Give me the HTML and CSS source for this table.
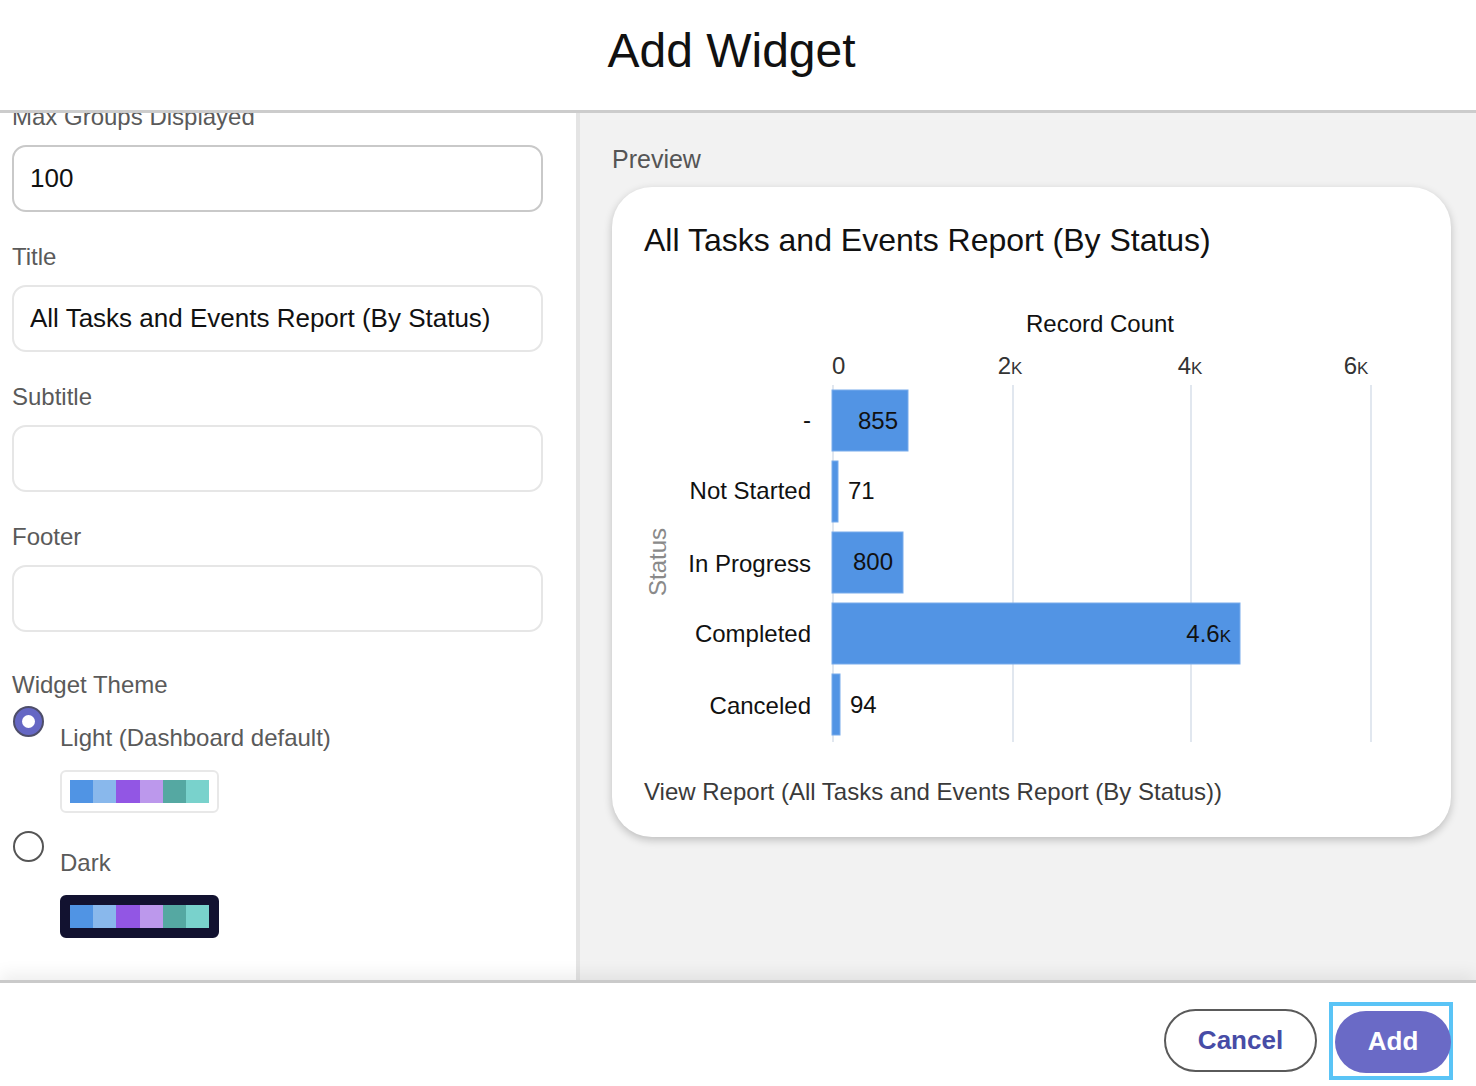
FILE: index.html
```html
<!DOCTYPE html>
<html lang="en">
<head>
<meta charset="utf-8">
<title>Add Widget</title>
<link rel="stylesheet" href="styles.css">
</head>
<body>
<div class="modal">
  <header class="modal-header">
    <h1 class="modal-title">Add Widget</h1>
  </header>
  <main class="modal-body">
    <section class="form-panel">
      <div class="form-content">
        <div class="field">
          <label class="field-label">Max Groups Displayed</label>
          <input class="field-input is-strong" type="text" value="100">
        </div>
        <div class="field">
          <label class="field-label">Title</label>
          <input class="field-input" type="text" value="All Tasks and Events Report (By Status)">
        </div>
        <div class="field">
          <label class="field-label">Subtitle</label>
          <input class="field-input" type="text" value="">
        </div>
        <div class="field">
          <label class="field-label">Footer</label>
          <input class="field-input" type="text" value="">
        </div>
        <div class="theme-group">
          <div class="field-label">Widget Theme</div>
          <div class="theme-option">
            <span class="radio is-checked"></span>
            <div class="theme-body">
              <div class="theme-name">Light (Dashboard default)</div>
              <div class="swatch swatch-light">
                <span class="c1"></span><span class="c2"></span><span class="c3"></span><span class="c4"></span><span class="c5"></span><span class="c6"></span>
              </div>
            </div>
          </div>
          <div class="theme-option">
            <span class="radio"></span>
            <div class="theme-body">
              <div class="theme-name">Dark</div>
              <div class="swatch swatch-dark">
                <span class="c1"></span><span class="c2"></span><span class="c3"></span><span class="c4"></span><span class="c5"></span><span class="c6"></span>
              </div>
            </div>
          </div>
        </div>
      </div>
    </section>
    <section class="preview-panel">
      <div class="preview-label">Preview</div>
      <div class="card">
        <div class="card-title">All Tasks and Events Report (By Status)</div>
        <svg class="chart" width="775" height="520" viewBox="0 0 775 520">
          <text class="axis-title" x="456" y="74" text-anchor="middle">Record Count</text>
          <text class="tick" x="188" y="116">0</text>
          <text class="tick" x="366" y="116" text-anchor="middle">2k</text>
          <text class="tick" x="546" y="116" text-anchor="middle">4k</text>
          <text class="tick" x="712" y="116" text-anchor="middle">6k</text>
          <g class="grid">
            <line x1="189" y1="127" x2="189" y2="484"></line>
            <line x1="369" y1="127" x2="369" y2="484"></line>
            <line x1="547" y1="127" x2="547" y2="484"></line>
            <line x1="727" y1="127" x2="727" y2="484"></line>
          </g>
          <g class="bars">
            <rect x="188" y="132" width="76" height="61"></rect>
            <rect x="188" y="203" width="6" height="61"></rect>
            <rect x="188" y="274" width="71" height="61"></rect>
            <rect x="188" y="345" width="408" height="61"></rect>
            <rect x="188" y="416" width="8" height="61"></rect>
          </g>
          <g class="values">
            <text x="254" y="171" text-anchor="end">855</text>
            <text x="204" y="241">71</text>
            <text x="249" y="312" text-anchor="end">800</text>
            <text x="587" y="384" text-anchor="end">4.6k</text>
            <text x="206" y="455">94</text>
          </g>
          <g class="cats">
            <text x="167" y="170" text-anchor="end">-</text>
            <text x="167" y="241" text-anchor="end">Not Started</text>
            <text x="167" y="314" text-anchor="end">In Progress</text>
            <text x="167" y="384" text-anchor="end">Completed</text>
            <text x="167" y="456" text-anchor="end">Canceled</text>
          </g>
          <text class="dim-title" transform="translate(22,304) rotate(-90)" text-anchor="middle">Status</text>
        </svg>
        <div class="card-link">View Report (All Tasks and Events Report (By Status))</div>
      </div>
    </section>
  </main>
  <footer class="modal-footer">
    <button class="btn btn-cancel" type="button">Cancel</button>
    <div class="focus-ring">
      <button class="btn btn-add" type="button">Add</button>
    </div>
  </footer>
</div>
</body>
</html>
```
FILE: styles.css
```css
* { box-sizing: border-box; }

html, body {
  margin: 0;
  padding: 0;
  background: #ffffff;
}

body {
  font-family: "Liberation Sans", Arial, Helvetica, sans-serif;
  color: #111;
}

.modal {
  width: 1476px;
  height: 1086px;
  display: flex;
  flex-direction: column;
  overflow: hidden;
}

.modal-header {
  height: 113px;
  flex: none;
  border-bottom: 3px solid #cccccc;
  display: flex;
  align-items: center;
  justify-content: center;
  padding-right: 13px;
  background: #fff;
}

.modal-title {
  margin: 0;
  font-size: 48px;
  font-weight: 400;
  line-height: 1;
  color: #111;
  padding-bottom: 8px;
}

.modal-body {
  flex: 1;
  min-height: 0;
  display: flex;
}

.form-panel {
  width: 580px;
  flex: none;
  border-right: 4px solid #e4e4e4;
  background: #fff;
  overflow: hidden;
  padding: 0 33px 0 12px;
}

.form-content {
  margin-top: -10px;
}

.field {
  margin-bottom: 31px;
}

.field-label {
  display: block;
  font-size: 24px;
  line-height: 28px;
  color: #5a5a5a;
  margin-bottom: 14px;
}

.field-input {
  display: block;
  width: 531px;
  height: 67px;
  border: 2px solid #e6e6e6;
  border-radius: 14px;
  padding: 0 16px;
  font-family: "Liberation Sans", Arial, sans-serif;
  font-size: 26px;
  color: #111;
  background: #fff;
  outline: none;
}

.field-input.is-strong {
  border-color: #c9c9c9;
}

.theme-group {
  padding-top: 8px;
}

.theme-group .field-label {
  margin-bottom: 7px;
}

.theme-option {
  display: flex;
  gap: 16px;
  margin-bottom: 18px;
}

.radio {
  flex: none;
  width: 31px;
  height: 31px;
  margin-left: 1px;
  border-radius: 50%;
  border: 2px solid #555;
  background: #fff;
  display: flex;
  align-items: center;
  justify-content: center;
}

.radio.is-checked {
  background: #6567c4;
  border-color: #4e4e6a;
}

.radio.is-checked::after {
  content: "";
  width: 13px;
  height: 13px;
  border-radius: 50%;
  background: #fff;
}

.theme-body {
  padding-top: 18px;
}

.theme-name {
  font-size: 24px;
  line-height: 28px;
  color: #5a5a5a;
  margin-bottom: 18px;
}

.swatch {
  width: 159px;
  height: 43px;
  border-radius: 6px;
  padding: 8px;
  display: flex;
}

.swatch-light {
  border: 2px solid #e8e8e8;
  background: #fff;
}

.swatch-dark {
  border: 2px solid #121230;
  background: #121230;
}

.swatch span { flex: 1; }
.swatch .c1 { background: #5094e4; }
.swatch .c2 { background: #89b8ec; }
.swatch .c3 { background: #9256e4; }
.swatch .c4 { background: #bc98ec; }
.swatch .c5 { background: #55a8a2; }
.swatch .c6 { background: #79d2cc; }

.preview-panel {
  flex: 1;
  background: #f2f2f2;
  padding: 31px 25px 0 32px;
}

.preview-label {
  font-size: 25px;
  line-height: 30px;
  color: #555;
  margin-bottom: 13px;
}

.card {
  width: 839px;
  height: 650px;
  background: #fff;
  border-radius: 40px;
  box-shadow: 0 3px 8px rgba(0, 0, 0, 0.22);
  padding: 35px 32px 0 32px;
}

.card-title {
  font-size: 32px;
  line-height: 36px;
  color: #111;
}

.chart {
  display: block;
  font-family: "Liberation Sans", Arial, sans-serif;
  font-size: 24px;
}

.chart .axis-title { fill: #111; }
.chart .tick { fill: #333; font-variant: small-caps; }
.chart .grid line { stroke: #e1e7ef; stroke-width: 2; }
.chart .bars rect { fill: #5294e4; stroke: #79acec; stroke-width: 1; }
.chart .values text { fill: #111; font-variant: small-caps; }
.chart .cats text { fill: #111; }
.chart .dim-title { fill: #8a8a8a; }

.card-link {
  font-size: 24px;
  line-height: 28px;
  color: #3a3a3a;
}

.modal-footer {
  height: 106px;
  flex: none;
  position: relative;
  border-top: 3px solid #cacaca;
  background: #fff;
  box-shadow: 0 -6px 16px rgba(0, 0, 0, 0.07);
  display: flex;
  align-items: center;
  justify-content: flex-end;
  gap: 12px;
  padding: 12px 23px 0 0;
}

.btn {
  font-family: "Liberation Sans", Arial, sans-serif;
  font-size: 26px;
  font-weight: 700;
  border-radius: 32px;
  height: 63px;
  cursor: pointer;
}

.btn-cancel {
  width: 153px;
  border: 2px solid #5a5a5a;
  background: #fff;
  color: #474ca6;
}

.focus-ring {
  border: 4px solid #5ac4f6;
  padding: 5px 0 3px 2px;
  width: 124px;
  height: 78px;
}

.btn-add {
  width: 116px;
  height: 62px;
  border: none;
  background: #6a6ac6;
  color: #fff;
}
```
